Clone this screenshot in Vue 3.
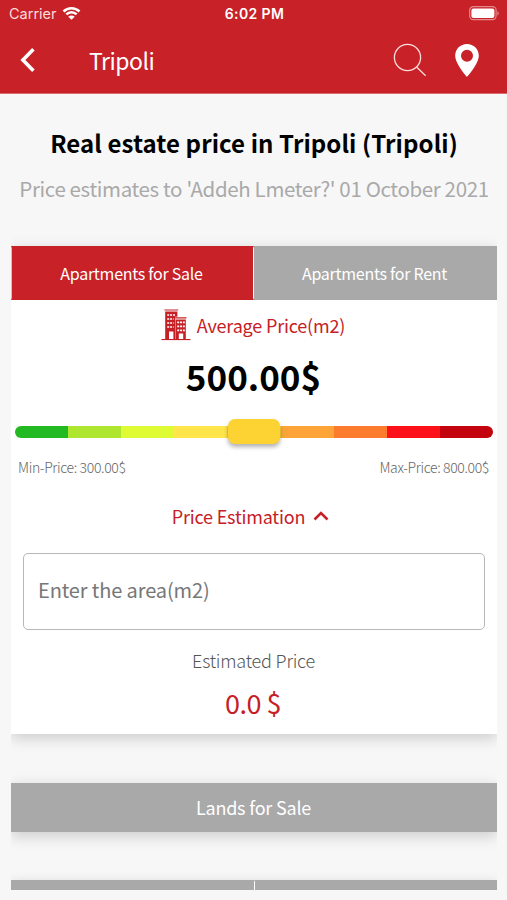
<template>
  <div class="screen">
    <header class="header">
      <div class="status-bar">
        <div class="carrier">
          <span>Carrier</span>
          <svg
            class="wifi"
            viewBox="0 0 20 15"
          >
            <path
              d="M1.6 5.4a12 12 0 0 1 16.8 0M4.6 8.5a7.6 7.6 0 0 1 10.8 0"
              fill="none"
              stroke="#fff"
              stroke-width="2.6"
            />
            <path
              d="M10 14.2 6.6 10.9a4.8 4.8 0 0 1 6.8 0z"
              fill="#fff"
            />
          </svg>
        </div>
        <span class="time">6:02 PM</span>
        <div class="battery-wrap">
          <svg
            class="battery"
            viewBox="0 0 31 15"
          >
            <rect
              x="0.7"
              y="0.7"
              width="26.4"
              height="13"
              rx="3.6"
              fill="none"
              stroke="#e3898c"
              stroke-width="1.2"
            />
            <rect
              x="2.4"
              y="2.4"
              width="23"
              height="9.6"
              rx="2"
              fill="#fff"
            />
            <path
              d="M28.4 5v4.6c1.8-.8 1.8-3.8 0-4.6z"
              fill="#e3898c"
            />
          </svg>
        </div>
      </div>
      <div class="nav-bar">
        <button
          type="button"
          class="icon-btn back"
        >
          <svg
            width="16"
            height="26"
            viewBox="0 0 16 26"
          >
            <path
              d="M13.4 2.2 2.9 13l10.5 10.8"
              fill="none"
              stroke="#fff"
              stroke-width="3.6"
            />
          </svg>
        </button>
        <span class="nav-title">Tripoli</span>
        <button
          type="button"
          class="icon-btn search"
        >
          <svg
            width="34"
            height="34"
            viewBox="0 0 34 34"
          >
            <g
              fill="none"
              stroke="#fbdcdc"
              stroke-width="1.3"
            >
              <circle
                cx="14.5"
                cy="14.5"
                r="13.1"
              />
              <path d="M23.6 24 32.6 32.8" />
            </g>
          </svg>
        </button>
        <button
          type="button"
          class="icon-btn pin"
        >
          <svg
            width="24"
            height="33"
            viewBox="0 0 24 33"
          >
            <path
              d="M12 0C5.4 0 .2 5.1.2 11.6.2 20.2 12 33 12 33s11.8-12.8 11.8-21.4C23.8 5.1 18.6 0 12 0zm0 17.7a6 6 0 1 1 0-12 6 6 0 0 1 0 12z"
              fill="#fff"
            />
          </svg>
        </button>
      </div>
    </header>

    <main class="content">
      <h1 class="title">
        Real estate price in Tripoli (Tripoli)
      </h1>
      <p class="subtitle">
        Price estimates to 'Addeh Lmeter?' 01 October 2021
      </p>

      <section class="card">
        <div class="tabs">
          <button
            v-for="tab in tabs"
            :key="tab"
            type="button"
            class="tab"
            :class="{ active: tab === activeTab }"
            @click="activeTab = tab"
          >
            {{ tab }}
          </button>
        </div>

        <div class="average">
          <svg
            class="building"
            width="30"
            height="32"
            viewBox="0 0 30 32"
          >
            <g fill="#c62027">
              <path d="M3.4.5h13.8v1.1H3.4zM4.2 2.6h12.200v5.200H14V30h-1.600v-7.500H8V30H4.200z" />
              <path d="M13.500 8.200h12v1.200h-12zM14.400 10.400h10.400V30h-2.600v-5.500h-4.400V30h-3.400z" />
              <path d="M.5 30h29v1.100H.5z" />
            </g>
            <path
              d="M6.2 6h8M6.2 10h6.400M6.2 14h6.400M6.2 18h6.400M16.200 13.400h7.600M16.200 17.400h7.600M16.200 21.400h7.600"
              fill="none"
              stroke="#fff"
              stroke-width="1.7"
              stroke-dasharray="2 .9"
            />
          </svg>
          <span class="average-label">Average Price(m2)</span>
        </div>
        <div class="average-price">
          <span>500.00$</span>
        </div>

        <div class="scale">
          <div class="scale-bar">
            <span
              v-for="color in colors"
              :key="color"
              class="segment"
              :style="{ backgroundColor: color }"
            />
          </div>
          <span class="thumb" />
        </div>
        <div class="range">
          <span class="min-price">Min-Price: 300.00$</span>
          <span class="max-price">Max-Price: 800.00$</span>
        </div>

        <button
          type="button"
          class="estimation-toggle"
          @click="isOpen = !isOpen"
        >
          <span>Price Estimation</span>
          <svg
            class="chevron"
            :class="{ closed: !isOpen }"
            width="16"
            height="10"
            viewBox="0 0 16 10"
          >
            <path
              d="M1.5 8.5 8 2.1l6.5 6.4"
              fill="none"
              stroke="#c62027"
              stroke-width="2.5"
            />
          </svg>
        </button>

        <div
          v-if="isOpen"
          class="estimation"
        >
          <input
            v-model="area"
            type="text"
            class="area-input"
            placeholder="Enter the area(m2)"
          >
          <div class="estimated-label">
            <span>Estimated Price</span>
          </div>
          <div class="estimated-price">
            <span>{{ estimatedPrice }} $</span>
          </div>
        </div>
      </section>

      <section class="card lands">
        <span>Lands for Sale</span>
      </section>

      <section class="card next">
        <span class="next-tab" />
        <span class="next-tab" />
      </section>
    </main>
  </div>
</template>

<script setup>
import { ref, computed } from "vue";

const tabs = ["Apartments for Sale", "Apartments for Rent"];
const activeTab = ref(tabs[0]);
const isOpen = ref(true);
const area = ref("");

const colors = [
  "#22b922",
  "#ade52f",
  "#defb34",
  "#ffe44a",
  "#fdd233",
  "#fda438",
  "#fd7b2c",
  "#fd1119",
  "#c3040e",
];

const estimatedPrice = computed(() => ((Number(area.value) || 0) * 500).toFixed(1));
</script>

<style>
body {
  margin: 0;
  background: #f7f7f7;
}
</style>

<style scoped>
.screen {
  height: 900px;
  overflow: hidden;
  background: #f7f7f7;
  font-family: "Noto Sans CJK SC", "Noto Sans", sans-serif;
  color: #000;
}

button {
  margin: 0;
  padding: 0;
  border: 0;
  background: none;
  font-family: inherit;
}

svg {
  display: block;
  flex: none;
}

span {
  white-space: nowrap;
}

.header {
  height: 94px;
  box-sizing: border-box;
  background: #c82128;
  border-bottom: 1px solid #dc6a6e;
  color: #fff;
}

.status-bar {
  display: grid;
  grid-template-columns: 1fr auto 1fr;
  align-items: center;
  height: 28px;
  box-sizing: border-box;
  padding: 0 7px 2px 9px;
  font-family: Inter, sans-serif;
  font-size: 14.5px;
}

.carrier {
  display: flex;
  align-items: center;
  gap: 5px;
  color: #fbdcdc;
}

.wifi {
  width: 19px;
  height: 15px;
}

.time {
  font-size: 14px;
  font-weight: 600;
  letter-spacing: 0.4px;
}

.battery-wrap {
  display: flex;
  justify-content: flex-end;
}

.battery {
  width: 31px;
  height: 15px;
}

.nav-bar {
  display: flex;
  align-items: center;
  height: 64px;
  padding: 0 28px 0 20px;
}

.nav-title {
  flex: 1;
  margin-left: 53px;
  padding-bottom: 1px;
  font-size: 23px;
  letter-spacing: -0.5px;
}

.pin {
  margin-left: 28px;
}

.content {
  padding: 32px 10px 0 11px;
}

.title {
  margin: 0;
  height: 34px;
  line-height: 34px;
  font-size: 24px;
  font-weight: 700;
  letter-spacing: 0.08px;
  text-align: center;
  white-space: nowrap;
}

.subtitle {
  margin: 11px 0 0;
  height: 34px;
  line-height: 34px;
  font-size: 20.5px;
  letter-spacing: -0.36px;
  color: #a9a9a9;
  text-align: center;
  white-space: nowrap;
}

.card {
  height: 488px;
  margin-top: 41px;
  background: #fff;
  box-shadow: 0 4px 14px rgba(0, 0, 0, 0.18);
  clip-path: inset(-30px 0);
}

.tabs {
  display: flex;
  height: 54px;
}

.tab {
  flex: 1;
  padding-right: 2px;
  background: #a9a9a9;
  color: #fff;
  font-size: 16px;
  letter-spacing: -0.27px;
}

.tab.active {
  background: #c82128;
  border: solid #c82128;
  border-width: 2px 1px;
  border-left-color: #f0b5b7;
  border-right-color: #fff;
}

.tab:first-child {
  flex: none;
  width: 243px;
  box-sizing: border-box;
}

.average {
  display: flex;
  align-items: center;
  justify-content: center;
  gap: 6px;
  height: 50px;
  padding-right: 2px;
}

.average-label {
  font-size: 18px;
  letter-spacing: -0.18px;
  color: #c62027;
}

.average-price {
  display: flex;
  justify-content: center;
  height: 50px;
  line-height: 50px;
  margin-top: 1px;
  padding-right: 1px;
  font-size: 35px;
  font-weight: 700;
}

.scale {
  position: relative;
  margin: 25px 4px 0;
}

.scale-bar {
  display: flex;
  height: 12px;
  border-radius: 6px;
  overflow: hidden;
}

.segment {
  flex: 1;
}

.thumb {
  position: absolute;
  top: -7px;
  left: 50%;
  width: 52px;
  height: 25px;
  margin-left: -26px;
  border-radius: 7px;
  background: #fdd233;
  box-shadow: 0 3px 4px rgba(0, 0, 0, 0.3);
}

.range {
  display: flex;
  justify-content: space-between;
  height: 24px;
  line-height: 24px;
  margin: 17px 8px 0 7px;
  font-size: 14px;
  font-weight: 300;
  letter-spacing: -0.36px;
  color: #666;
}

.estimation-toggle {
  display: flex;
  align-items: center;
  gap: 8px;
  height: 30px;
  margin: 22px auto 0;
  padding-right: 7px;
  font-size: 18px;
  letter-spacing: -0.2px;
  color: #c62027;
}

.chevron.closed {
  transform: rotate(180deg);
}

.estimation {
  padding: 22px 12px 0;
}

.area-input {
  display: block;
  width: 100%;
  height: 77px;
  box-sizing: border-box;
  padding: 0 14px 4px;
  border: 1.5px solid #b8b8b8;
  border-radius: 5px;
  outline: none;
  font-family: inherit;
  font-size: 20px;
  letter-spacing: -0.12px;
  background: #fff;
}

.area-input::placeholder {
  color: #777;
  opacity: 1;
}

.estimated-label {
  display: flex;
  justify-content: center;
  height: 30px;
  line-height: 30px;
  margin-top: 15px;
  padding-right: 1px;
  font-size: 18px;
  font-weight: 300;
  letter-spacing: -0.2px;
  color: #555;
}

.estimated-price {
  display: flex;
  justify-content: center;
  height: 40px;
  line-height: 40px;
  margin-top: 8px;
  padding-right: 2px;
  font-size: 27px;
  letter-spacing: -0.5px;
  color: #c62027;
}

.lands {
  display: flex;
  align-items: center;
  justify-content: center;
  height: 49px;
  box-sizing: border-box;
  margin-top: 49px;
  padding: 0 1px 2px 0;
  background: #a9a9a9;
  color: #fff;
  font-size: 18px;
  letter-spacing: -0.2px;
}

.next {
  display: flex;
  height: 10px;
  margin-top: 48px;
  clip-path: inset(-30px 0 0);
}

.next-tab {
  flex: 1;
  box-sizing: border-box;
  background: #a9a9a9;
}

.next-tab:first-child {
  border-top: 2px solid #a9a9a9;
  border-right: 1px solid #fff;
}
</style>
